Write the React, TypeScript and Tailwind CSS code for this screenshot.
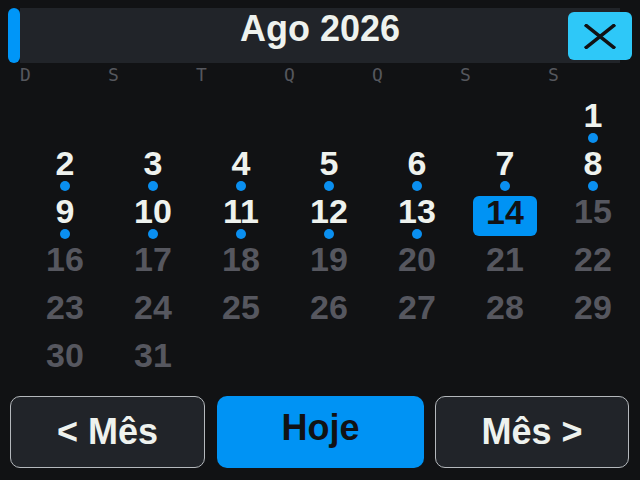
import React from 'react';

const weekDays = ['D', 'S', 'T', 'Q', 'Q', 'S', 'S'];
const today = 14;
const firstOffset = 6; // 1 de agosto de 2026 cai num sábado

function buildCells() {
  const cells: (number | null)[] = [];
  for (let i = 0; i < firstOffset; i++) cells.push(null);
  for (let d = 1; d <= 31; d++) cells.push(d);
  while (cells.length % 7 !== 0) cells.push(null);
  return cells;
}

function DayCell({ day }: { day: number | null }) {
  if (day === null) return <div className="h-12" />;
  if (day === today) {
    return (
      <div className="h-12 flex flex-col items-center">
        <div className="mt-[2px] w-16 h-10 rounded-md bg-[#0093f4] text-[#111214] text-[34px] leading-[32px] font-bold text-center">
          {day}
        </div>
      </div>
    );
  }
  const past = day < today;
  return (
    <div className="h-12 flex flex-col items-center">
      <div
        className={
          past
            ? 'h-[34px] text-[34px] leading-[34px] font-bold text-[#eef2ee]'
            : 'h-[34px] text-[34px] leading-[34px] font-bold text-[#56575f]'
        }
      >
        {day}
      </div>
      {past && <div className="mt-[1px] w-[10px] h-[10px] rounded-full bg-[#0a8ff0]" />}
    </div>
  );
}

export default function App() {
  const cells = buildCells();
  return (
    <div className="w-[640px] h-[480px] overflow-hidden bg-[#111214] font-['Liberation_Sans',Arial,sans-serif] flex flex-col">
      {/* cabeçalho */}
      <div className="mt-2 ml-2 h-[55px] flex">
        <div className="w-3 h-full rounded-full bg-[#0096f8]" />
        <div className="w-[600px] h-full bg-[#212429] flex justify-center pt-[3px]">
          <span className="text-[36px] leading-[36px] font-bold text-[#eef2ee]">Ago 2026</span>
        </div>
        <button className="ml-[-52px] mt-1 w-16 h-12 rounded-md bg-[#2ec8f8] flex items-center justify-center">
          <svg width="32" height="25" viewBox="0 0 32 25">
            <path d="M1 0.5 L31 24.5 M31 0.5 L1 24.5" stroke="#111214" strokeWidth="3.4" fill="none" />
          </svg>
        </button>
      </div>

      {/* dias da semana */}
      <div className="mt-[3px] ml-5 grid grid-cols-[repeat(7,88px)]">
        {weekDays.map((w, i) => (
          <span key={i} className="font-['DejaVu_Sans_Mono',monospace] text-[18px] leading-[18px] text-[#55575d]">
            {w}
          </span>
        ))}
      </div>

      {/* grade do mês */}
      <div className="mt-[14px] ml-[21px] grid grid-cols-[repeat(7,88px)]">
        {cells.map((d, i) => (
          <DayCell key={i} day={d} />
        ))}
      </div>

      {/* botões */}
      <div className="mt-auto mb-[12px] ml-[10px] flex">
        <button className="w-[195px] h-[72px] rounded-[10px] border border-[#b4b8bc] bg-[#212429] text-[36px] font-bold text-[#eef2ee] flex items-center justify-center">
          &lt; Mês
        </button>
        <button className="ml-3 w-[207px] h-[72px] rounded-[10px] bg-[#0093f4] text-[36px] font-bold text-[#111214] flex items-center justify-center pb-[9px]">
          Hoje
        </button>
        <button className="ml-[11px] w-[194px] h-[72px] rounded-[10px] border border-[#b4b8bc] bg-[#212429] text-[36px] font-bold text-[#eef2ee] flex items-center justify-center">
          Mês &gt;
        </button>
      </div>
    </div>
  );
}
